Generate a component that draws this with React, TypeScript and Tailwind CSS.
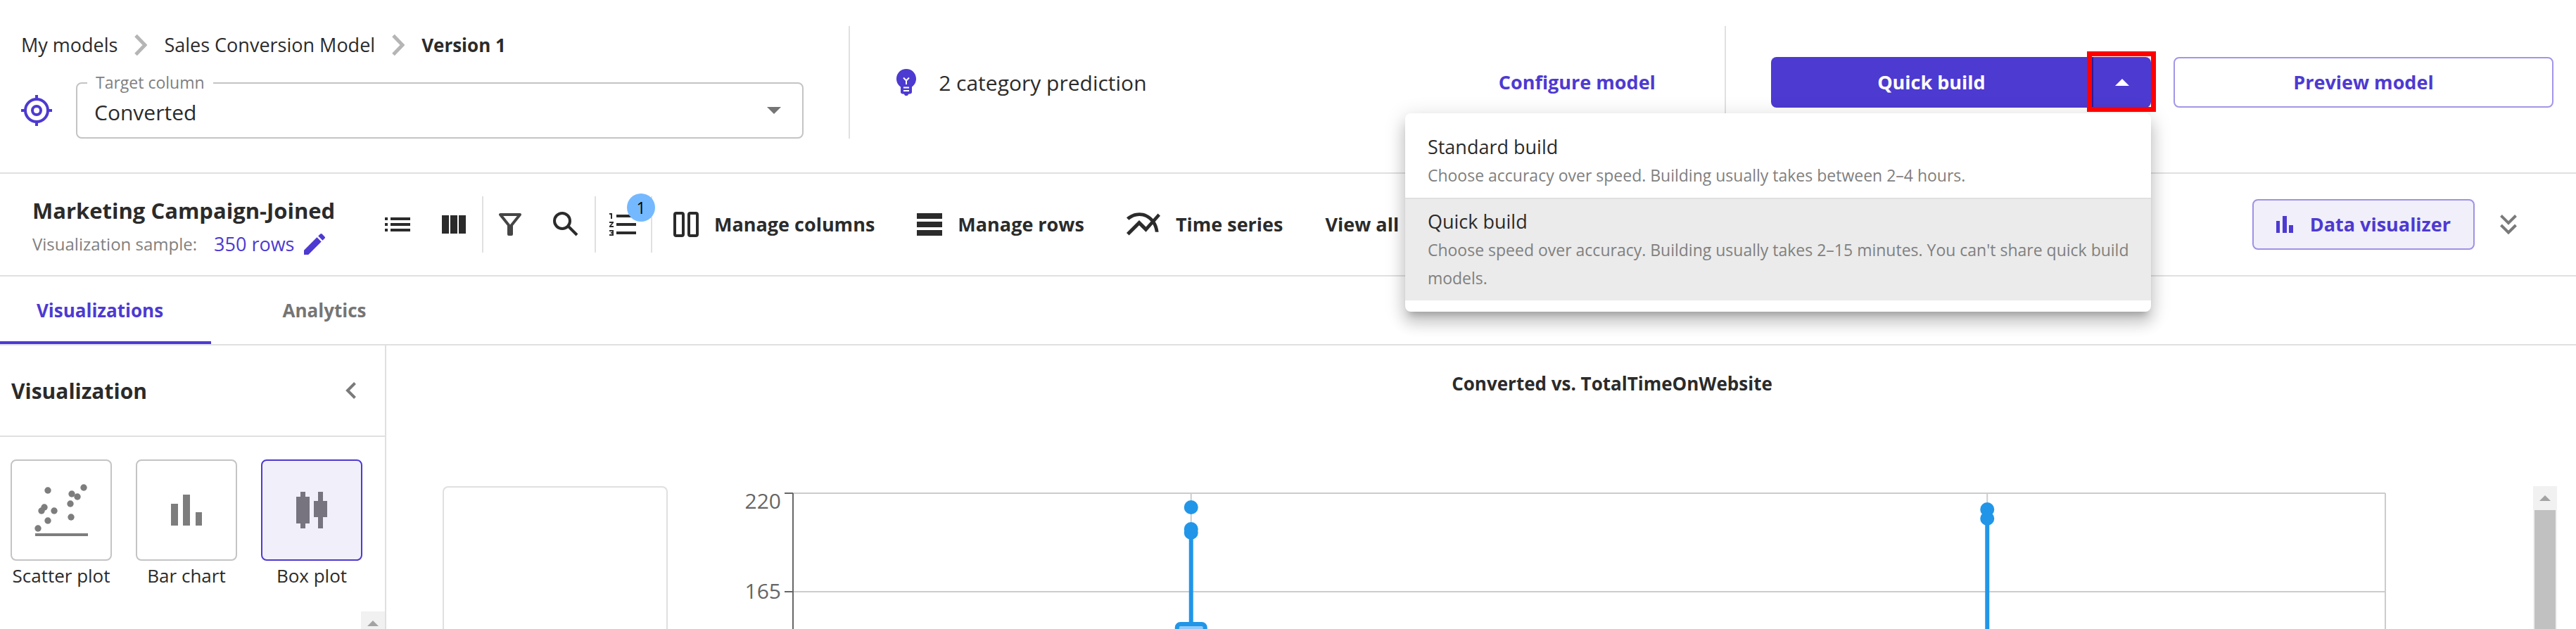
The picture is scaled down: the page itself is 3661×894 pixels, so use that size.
import React from "react";
import { MdEdit, MdFormatListNumbered } from "react-icons/md";

const buildOptions = [
  {
    name: "Standard build",
    description: "Choose accuracy over speed. Building usually takes between 2–4 hours.",
    selected: false
  },
  {
    name: "Quick build",
    description: "Choose speed over accuracy. Building usually takes 2–15 minutes. You can't share quick build models.",
    selected: true
  }
];

const series = [
  { x: "25%", outliers: [30, 61, 66], boxTop: 195 },
  { x: "75%", outliers: [33, 46], boxTop: 260 }
];

const ticks = [
  { label: "220", y: 10, textY: 32 },
  { label: "165", y: 150, textY: 160 }
];

function Crumb() {
  return (
    <svg className="w-[18px] h-[30px] shrink-0" viewBox="0 0 18 30" fill="none" stroke="#b5b5b5" strokeWidth="5">
      <path d="M2 1.500L15 15L2 28.500" />
    </svg>
  );
}

function TargetIcon() {
  return (
    <svg className="w-11 h-11 shrink-0" viewBox="0 0 44 44" fill="none" stroke="#4d3ad1" strokeWidth="4">
      <circle cx="22" cy="22" r="16" />
      <circle cx="22" cy="22" r="6" />
      <path d="M22 0V6M22 38V44M0 22H6M38 22H44" />
    </svg>
  );
}

function BulbIcon() {
  return (
    <svg className="w-7 h-[38px] shrink-0" viewBox="0 0 28 38">
      <path d="M14 0C6 0 0 6.200 0 14c0 5 2.500 9 6 11.500V33c0 1.500 1.500 2.500 3 2.500h1.500L12.500 38h3l2-2.500H19c1.500 0 3-1 3-2.500v-7.500c3.500-2.500 6-6.500 6-11.500C28 6.200 22 0 14 0z" fill="#4d3ad1" />
      <path d="M10 12.500L14 16.500L18 12.500M14 16.500V22M10 26.500H18M10 31H18" fill="none" stroke="#fff" strokeWidth="2" />
    </svg>
  );
}

function ListIcon() {
  return (
    <svg className="w-9 h-5" viewBox="0 0 36 20" fill="currentColor">
      <path d="M0 0h4v4H0zM8 0h28v4H8zM0 8h4v4H0zM8 8h28v4H8zM0 16h4v4H0zM8 16h28v4H8z" />
    </svg>
  );
}

function ColumnsIcon() {
  return (
    <svg className="w-9 h-[26px]" viewBox="0 0 36 26" fill="currentColor">
      <path d="M1 0h10v26H1zM13 0h10v26H13zM25 0h10v26H25z" />
    </svg>
  );
}

function FilterIcon() {
  return (
    <svg className="w-8 h-8" viewBox="0 0 32 32" fill="none" stroke="#454545" strokeWidth="4" strokeLinejoin="round">
      <path d="M2 2H30L18 17V30H14V17Z" />
    </svg>
  );
}

function SearchIcon() {
  return (
    <svg className="w-[38px] h-9" viewBox="0 0 38 36" fill="none" stroke="currentColor" strokeWidth="4">
      <circle cx="14" cy="13" r="11" />
      <path d="M23 21L35 33" />
    </svg>
  );
}

function ManageColumnsIcon() {
  return (
    <svg className="w-9 h-9" viewBox="0 0 36 36" fill="none" stroke="currentColor" strokeWidth="4">
      <rect x="2" y="2" width="12" height="32" rx="2" />
      <rect x="22" y="2" width="12" height="32" rx="2" />
    </svg>
  );
}

function ManageRowsIcon() {
  return (
    <svg className="w-9 h-8" viewBox="0 0 36 32" fill="currentColor">
      <path d="M0 0h36v8H0zM0 12h36v8H0zM0 24h36v8H0z" />
    </svg>
  );
}

function TimeSeriesIcon() {
  return (
    <svg className="w-12 h-[34px]" viewBox="2 5 20 14" fill="currentColor">
      <path d="M22 6.92l-1.41-1.41-2.85 3.21C15.68 6.4 12.83 5 9.61 5 6.72 5 4.07 6.16 2 8l1.42 1.42C5.12 7.93 7.27 7 9.61 7c2.74 0 5.09 1.26 6.77 3.24l-2.88 3.24-4-4L2 16.99l1.5 1.5 6-6.01 4 4 4.05-4.55c.75 1.35 1.25 2.9 1.44 4.55H21c-.22-2.3-.95-4.39-2.04-6.14L22 6.92z" />
    </svg>
  );
}

function ScatterArt() {
  const dots = [[53, 44], [87, 49], [104, 40], [95, 53], [85, 63], [86, 82], [62, 73], [48, 68], [44, 73], [53, 87], [39, 98]];
  return (
    <>
      {dots.map(([x, y]) => (
        <circle key={`${x}-${y}`} cx={x} cy={y} r="4.700" />
      ))}
      <path d="M35 105h75v4H35z" />
    </>
  );
}

function BarArt() {
  return <path d="M50 63h10v31H50zM67 50h10v44H67zM85 75h9v19h-9z" />;
}

function BoxArt() {
  return <path d="M50 53h19v38H50zM56 46h7v52h-7zM75 59h19v23H75zM81 46h7v52h-7z" />;
}

const plotTypes = [
  { name: "Scatter plot", Art: ScatterArt, active: false },
  { name: "Bar chart", Art: BarArt, active: false },
  { name: "Box plot", Art: BoxArt, active: true }
];

const tools = [
  { name: "Manage columns", Icon: ManageColumnsIcon },
  { name: "Manage rows", Icon: ManageRowsIcon },
  { name: "Time series", Icon: TimeSeriesIcon }
];

function Divider() {
  return <div className="w-0.5 h-20 bg-[#e0e0e0] shrink-0" />;
}

function BuildMenu() {
  return (
    <div
      role="menu"
      className="absolute right-0 top-full mt-2 w-[1060px] py-4 bg-white rounded-lg z-20 font-normal text-[#2b2b2b] shadow-[0_10px_10px_-6px_rgba(0,0,0,0.2),0_16px_20px_2px_rgba(0,0,0,0.14),0_6px_28px_4px_rgba(0,0,0,0.12)]"
    >
      {buildOptions.map((option) => (
        <button
          key={option.name}
          role="menuitem"
          className={
            option.selected
              ? "block w-full pl-8 pr-4 py-3 text-left bg-[#ebebeb] border-t-2 border-[#e0e0e0]"
              : "block w-full pl-8 pr-4 py-3 text-left"
          }
        >
          <span className="block text-[27px] leading-[40px]">{option.name}</span>
          <span className="block text-[23px] leading-[40px] text-[#808080]">{option.description}</span>
        </button>
      ))}
    </div>
  );
}

function Header() {
  return (
    <header className="flex shrink-0 pt-[37px] pb-12 border-b-2 border-[#e0e0e0]">
      <div className="w-[33%] pl-[30px] pr-16 border-r-2 border-[#e0e0e0]">
        <nav className="flex items-center gap-6 h-[54px] text-[27px]">
          <a href="#models">My models</a>
          <Crumb />
          <a href="#model">Sales Conversion Model</a>
          <Crumb />
          <span className="text-[26px] font-bold">Version 1</span>
        </nav>
        <div className="flex items-center gap-[34px] mt-[26px]">
          <TargetIcon />
          <div className="relative flex-1 flex items-center">
            <label htmlFor="target" className="absolute left-4 -top-4 px-3 bg-white text-[23px] leading-8 text-[#808080]">
              Target column
            </label>
            <select id="target" className="w-full h-20 pl-6 pt-1 border-2 border-[#c4c4c4] rounded-lg appearance-none bg-transparent text-[30px]">
              <option>Converted</option>
            </select>
            <svg className="absolute right-8 w-5 h-2.5 pointer-events-none" viewBox="0 0 20 10" fill="#757575">
              <path d="M0 0H20L10 10Z" />
            </svg>
          </div>
        </div>
      </div>
      <div className="w-[34%] flex items-center justify-between pl-[66px] pr-[98px] border-r-2 border-[#e0e0e0]">
        <div className="flex items-center gap-8 text-[30px]">
          <BulbIcon />
          2 category prediction
        </div>
        <button className="text-[27px] font-bold text-[#4d3ad1]">Configure model</button>
      </div>
      <div className="flex-1 grid grid-cols-2 items-center gap-8 pl-16 pr-8">
        <div className="relative flex h-[72px] text-[27px] font-bold text-white">
          <button className="flex-1 bg-[#4d3ad1] rounded-l-lg">Quick build</button>
          <div className="relative w-[84px]">
            <button
              aria-label="Choose build type"
              className="flex items-center justify-center w-full h-full bg-[#4d3ad1] rounded-r-lg border-l-2 border-[#2b1a9e]"
            >
              <svg className="w-5 h-2.5" viewBox="0 0 20 10" fill="#fff">
                <path d="M0 10H20L10 0Z" />
              </svg>
            </button>
            <div className="absolute -inset-x-[7px] -top-2 -bottom-1.5 border-7 border-[#ff0000] pointer-events-none z-30" />
          </div>
          <BuildMenu />
        </div>
        <button className="h-[72px] border-2 border-[#a296e8] rounded-lg text-[27px] font-bold text-[#4d3ad1]">
          Preview model
        </button>
      </div>
    </header>
  );
}

function Toolbar() {
  return (
    <div className="flex items-center h-[146px] shrink-0 pl-[46px] pr-[84px] border-b-2 border-[#e0e0e0]">
      <div className="w-[479px] shrink-0 pt-2">
        <h1 className="text-[31px] leading-[48px] font-bold">Marketing Campaign-Joined</h1>
        <div className="flex items-center h-12">
          <span className="text-[24px] text-[#808080]">Visualization sample:</span>
          <button className="flex items-center gap-2 ml-6 text-[27px] text-[#4d3ad1]">
            350 rows
            <MdEdit className="w-10 h-10" />
          </button>
        </div>
      </div>
      <button aria-label="List view" className="px-[22px]"><ListIcon /></button>
      <button aria-label="Grid view" className="px-[22px]"><ColumnsIcon /></button>
      <Divider />
      <button aria-label="Filter" className="px-[22px]"><FilterIcon /></button>
      <button aria-label="Search" className="px-[22px]"><SearchIcon /></button>
      <Divider />
      <button aria-label="Model recipe" className="relative px-[15px]">
        <MdFormatListNumbered className="w-12 h-12" />
        <span className="absolute right-[-6px] top-[-20px] flex items-center justify-center w-10 h-10 rounded-full bg-[#74b9ff] text-[23px] text-black z-10">
          1
        </span>
      </button>
      <Divider />
      <div className="flex items-center gap-[60px] pl-[30px] text-[27px] font-bold">
        {tools.map(({ name, Icon }) => (
          <button key={name} className="flex items-center gap-[22px]">
            <Icon />
            {name}
          </button>
        ))}
        <button>View all</button>
      </div>
      <div className="flex items-center gap-9 ml-auto">
        <button className="flex items-center gap-6 h-[72px] px-8 rounded-lg border-2 border-[#9f92e6] bg-[#f1effa] text-[27px] font-bold text-[#4d3ad1]">
          <svg className="w-6 h-6" viewBox="0 0 24 24" fill="currentColor">
            <path d="M0 7h5v17H0zM9 0h6v24H9zM18 13h6v11h-6z" />
          </svg>
          Data visualizer
        </button>
        <button aria-label="Expand">
          <svg className="w-6 h-7" viewBox="0 0 24 28" fill="none" stroke="#7a7a7a" strokeWidth="4">
            <path d="M1.500 1.500L12 12L22.500 1.500M1.500 15L12 25.500L22.500 15" />
          </svg>
        </button>
      </div>
    </div>
  );
}

function Sidebar() {
  return (
    <aside className="flex flex-col w-[549px] shrink-0 border-r-2 border-[#e0e0e0]">
      <div className="flex items-center justify-between h-[130px] shrink-0 pl-4 pr-10 border-b-2 border-[#e0e0e0]">
        <h2 className="text-[30px] font-bold">Visualization</h2>
        <button aria-label="Collapse panel">
          <svg className="w-4 h-6" viewBox="0 0 16 24" fill="none" stroke="#7a7a7a" strokeWidth="4">
            <path d="M13.500 1.500L3 12L13.500 22.500" />
          </svg>
        </button>
      </div>
      <div className="flex gap-[34px] pt-8 pl-[15px]">
        {plotTypes.map(({ name, Art, active }) => (
          <button key={name} className="flex flex-col items-center w-36 text-[26px] leading-[42px] whitespace-nowrap">
            <span
              className={
                active
                  ? "w-36 h-36 rounded-lg border-2 border-[#4d3ad1] bg-[#f1effa]"
                  : "w-36 h-36 rounded-lg border-2 border-[#c4c4c4]"
              }
            >
              <svg className="w-full h-full" viewBox="2 2 140 140" fill={active ? "#77747f" : "#7d7d7d"}>
                <Art />
              </svg>
            </span>
            {name}
          </button>
        ))}
      </div>
      <div className="self-end w-[34px] h-[34px] mt-[30px] shrink-0 flex items-center justify-center bg-[#f1f1f1]">
        <svg className="w-4 h-2" viewBox="0 0 16 8" fill="#a3a3a3">
          <path d="M0 8H16L8 0Z" />
        </svg>
      </div>
    </aside>
  );
}

function BoxPlot() {
  return (
    <svg className="flex-1 min-w-0 h-full ml-[178px] mr-[210px] overflow-visible">
      <line x1="0" x2="100%" y1="10" y2="10" stroke="#ccc" strokeWidth="2" />
      <line x1="0" x2="100%" y1="150" y2="150" stroke="#ccc" strokeWidth="2" />
      <line x1="100%" x2="100%" y1="10" y2="100%" stroke="#ccc" strokeWidth="2" />
      <line x1="0" x2="0" y1="10" y2="100%" stroke="#666" strokeWidth="2" />
      {ticks.map((tick) => (
        <React.Fragment key={tick.label}>
          <line x1="-12" x2="0" y1={tick.y} y2={tick.y} stroke="#666" strokeWidth="2" />
          <text x="-17" y={tick.textY} textAnchor="end" fill="#666" className="text-[30px]">{tick.label}</text>
        </React.Fragment>
      ))}
      {series.map((s) => (
        <svg key={s.x} x={s.x} className="overflow-visible">
          <line x1="0" x2="0" y1="10" y2="250" stroke="#ccc" strokeWidth="2" />
          <line x1="0" x2="0" y1={s.outliers[s.outliers.length - 1]} y2={s.boxTop} stroke="#2196e8" strokeWidth="6" />
          {s.outliers.map((y) => (
            <circle key={y} cx="0" cy={y} r="10" fill="#2196e8" />
          ))}
          <rect x="-20" y={s.boxTop + 1} width="40" height="80" rx="5" fill="#90caf9" stroke="#2196e8" strokeWidth="6" />
        </svg>
      ))}
    </svg>
  );
}

export default function App() {
  return (
    <div className="flex flex-col h-screen overflow-hidden bg-white text-[#2b2b2b] font-['Open_Sans','Noto_Sans',sans-serif]">
      <Header />
      <Toolbar />

      {/* Tabs */}
      <div role="tablist" className="flex h-[98px] shrink-0 border-b-2 border-[#e0e0e0] text-[26px] font-bold">
        <button role="tab" aria-selected="true" className="w-[300px] pr-4 pt-1 border-b-4 border-[#4d3ad1] text-[#4d3ad1]">
          Visualizations
        </button>
        <button role="tab" aria-selected="false" className="w-[322px] text-[#757575]">Analytics</button>
      </div>

      <div className="flex flex-1 min-h-0 overflow-hidden">
        <Sidebar />
        <main className="flex flex-col flex-1 min-w-0">
          <h3 className="h-[200px] shrink-0 pt-8 pl-[372px] text-center text-[26px] leading-[44px] font-bold">
            Converted vs. TotalTimeOnWebsite
          </h3>
          <div className="flex flex-1 min-h-0 pl-20 pr-[27px] overflow-hidden">
            <div className="w-80 shrink-0 border-2 border-b-0 border-[#e0e0e0] rounded-t-lg" />
            <BoxPlot />
            <div className="flex flex-col w-[34px] shrink-0 bg-[#f1f1f1]">
              <div className="flex items-center justify-center h-[34px] shrink-0">
                <svg className="w-4 h-2" viewBox="0 0 16 8" fill="#a3a3a3">
                  <path d="M0 8H16L8 0Z" />
                </svg>
              </div>
              <div className="flex-1 mx-0.5 bg-[#c1c1c1]" />
            </div>
          </div>
        </main>
      </div>
    </div>
  );
}
